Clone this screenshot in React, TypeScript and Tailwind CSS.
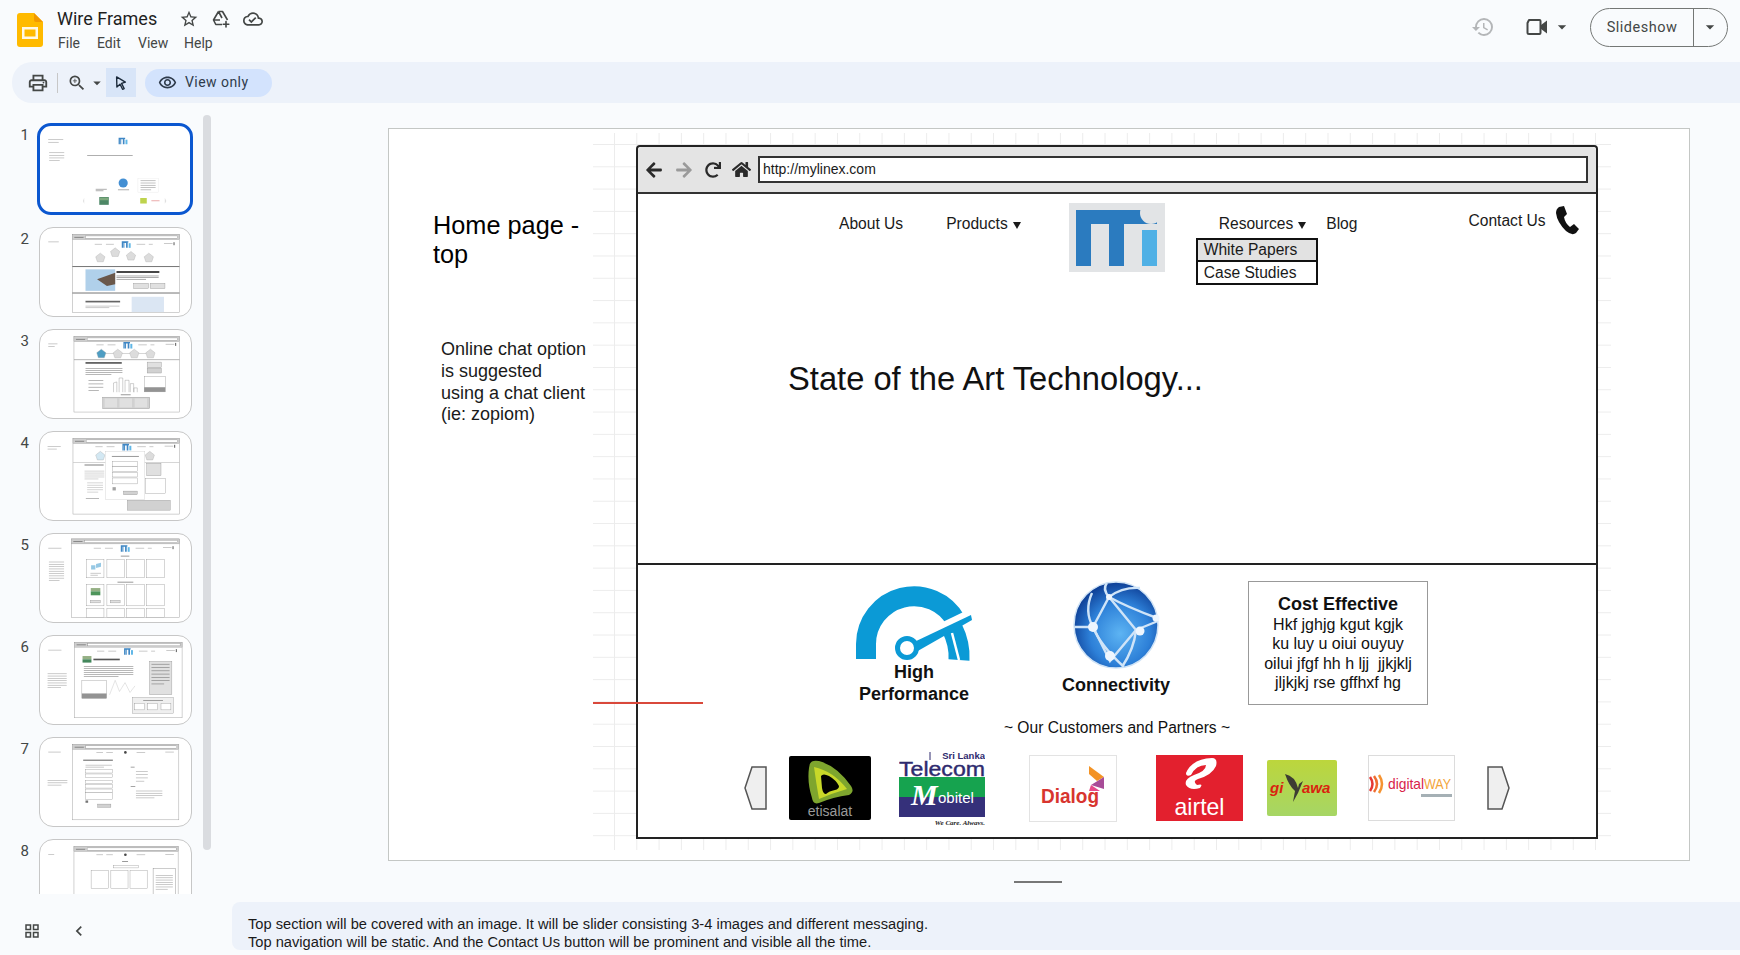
import React from 'react';
import {
  MdArrowDropDown,
  MdChevronLeft,
  MdHistory,
  MdOutlineCloudDone,
  MdOutlineGridView,
  MdOutlinePrint,
  MdOutlineRemoveRedEye,
  MdStarBorder,
  MdZoomIn,
} from 'react-icons/md';
import { FaArrowLeft, FaArrowRight, FaHome, FaRedo } from 'react-icons/fa';

const TopBar: React.FC = () => (
  <header className="flex h-[62px] shrink-0 items-start">
    <svg viewBox="0 0 26 34" className="ml-[17px] mt-[13px] h-[34px] w-[26px] shrink-0">
      <path d="M3 0H17L26 9V31a3 3 0 0 1-3 3H3a3 3 0 0 1-3-3V3a3 3 0 0 1 3-3Z" fill="#ffba00" />
      <path d="M17 0L26 9H19a2 2 0 0 1-2-2Z" fill="#f29900" />
      <path d="M5 14H21V26H5Z M7.5 16.5V23.5H18.5V16.5Z" fill="#fff" fillRule="evenodd" opacity="0.9" />
    </svg>
    <div className="ml-[14px] flex flex-col">
      <div className="mt-[7px] flex items-center">
        <span className="w-[120px] text-[18px] leading-[24px] text-[#1f1f1f]">Wire Frames</span>
        <MdStarBorder className="ml-[2px] text-[20px] text-[#444746]" />
        <svg viewBox="0 0 20 20" className="ml-[12px] h-[20px] w-[20px] text-[#444746]" fill="none" stroke="currentColor" strokeWidth="1.6" strokeLinejoin="round">
          <path d="M7.5 2.5H11.5L16.5 11M7.5 2.5L2.5 11L4.8 15.5H11M7.5 2.5L11 9M2.5 11H9" />
          <path d="M15 12.5V18M12.2 15.2H17.8" strokeLinecap="round" />
        </svg>
        <MdOutlineCloudDone className="ml-[12px] text-[20px] text-[#444746]" />
      </div>
      <nav className="mt-[2px] flex text-[14px] leading-[20px] text-[#444746]">
        <span className="w-[39px] pl-[1px]">File</span>
        <span className="w-[41px] pl-[1px]">Edit</span>
        <span className="w-[46px] pl-[1px]">View</span>
        <span className="pl-[1px]">Help</span>
      </nav>
    </div>
    <div className="ml-auto flex h-[54px] items-center">
      <MdHistory className="text-[24px] text-[#b4b6b8]" />
      <svg viewBox="0 0 22 18" className="ml-[31px] h-[18px] w-[22px] text-[#444746]">
        <path d="M3 2H13.5a1 1 0 0 1 1 1V15a1 1 0 0 1-1 1H3a1.5 1.5 0 0 1-1.5-1.5V5Z" fill="none" stroke="currentColor" strokeWidth="2" strokeLinejoin="round" />
        <path d="M15 7L21 2.5V15.5L15 11Z" fill="currentColor" />
      </svg>
      <MdArrowDropDown className="ml-[4px] text-[20px] text-[#444746]" />
      <div className="ml-[18px] mr-[12px] flex h-[39px] w-[138px] items-center rounded-full border border-[#747775] text-[14.5px] tracking-[0.5px] text-[#444746]">
        <span className="w-[103px] border-r border-[#747775] text-center leading-[37px]">Slideshow</span>
        <MdArrowDropDown className="ml-[6px] text-[20px]" />
      </div>
    </div>
  </header>
);

const Toolbar: React.FC = () => (
  <div className="ml-[12px] flex h-[41px] shrink-0 items-center rounded-l-[20px] bg-[#edf2fa]">
    <MdOutlinePrint className="ml-[15px] text-[22px] text-[#444746]" />
    <div className="ml-[8px] h-[20px] w-px bg-[#c7c7c7]" />
    <MdZoomIn className="ml-[9px] text-[20px] text-[#444746]" />
    <MdArrowDropDown className="ml-[1px] text-[18px] text-[#444746]" />
    <div className="flex h-[29px] w-[30px] items-center justify-center bg-[#d8e5f8]">
      <svg viewBox="0 0 16 18" className="h-[16px] w-[14px]">
        <path d="M3 2L13 8L8.6 9.4L11.6 15.3L9.8 16.2L6.9 10.4L3.3 13.6Z" fill="#dbe7f8" stroke="#1b2a3b" strokeWidth="1.6" strokeLinejoin="round" />
      </svg>
    </div>
    <div className="ml-[9px] flex h-[28px] w-[127px] items-center rounded-full bg-[#d3e3fd] text-[14px] tracking-[0.45px] text-[#2f3b4b]">
      <MdOutlineRemoveRedEye className="ml-[13px] text-[19px]" />
      <span className="ml-[8px]">View only</span>
    </div>
  </div>
);

const Greek: React.FC<{ x: number; y: number; w: number; n: number; step?: number; fill?: string }> = ({
  x,
  y,
  w,
  n,
  step = 6,
  fill = '#a8a8a8',
}) => (
  <>
    {Array.from({ length: n }).map((_, i) => (
      <rect key={i} x={x} y={y + i * step} width={i === n - 1 && n > 1 ? w * 0.7 : w} height={2} fill={fill} />
    ))}
  </>
);

const MiniMark: React.FC<{ x: number; y: number; s?: number }> = ({ x, y, s = 1 }) => (
  <g transform={`translate(${x} ${y}) scale(${s})`}>
    <path d="M0 0H20V4H18V20H13V5H8V20H5V5H4V20H0Z" fill="#2b7bbf" />
    <rect x="21" y="6" width="6" height="14" fill="#4fb0e5" />
  </g>
);

const MiniChrome: React.FC<{ x: number; y: number; x2: number; y2: number }> = ({ x, y, x2, y2 }) => (
  <>
    <rect x={x} y={y} width={x2 - x} height={y2 - y} fill="#fff" stroke="#999" strokeWidth="1.5" />
    <rect x={x} y={y} width={x2 - x} height={15} fill="#c9c9c9" stroke="#888" strokeWidth="1" />
    <rect x={x + 40} y={y + 4} width={x2 - x - 46} height={7} fill="#fff" stroke="#777" />
    <Greek x={x + 6} y={y + 7} w={28} n={1} fill="#555" />
  </>
);

const MiniNav: React.FC<{ x: number; y: number }> = ({ x, y }) => (
  <>
    <Greek x={x + 68} y={y + 8} w={22} n={1} />
    <Greek x={x + 102} y={y + 8} w={24} n={1} />
    <MiniMark x={x + 150} y={y} />
    <Greek x={x + 195} y={y + 8} w={26} n={1} />
    <Greek x={x + 232} y={y + 8} w={12} n={1} />
    <Greek x={x + 278} y={y + 6} w={26} n={1} />
    <rect x={x + 307} y={y + 3} width="3" height="9" fill="#444" />
  </>
);

const Pentagon: React.FC<{ cx: number; cy: number; fill?: string }> = ({ cx, cy, fill = '#d9d9d9' }) => (
  <path
    d={`M${cx} ${cy - 14}L${cx + 14} ${cy - 3}L${cx + 9} ${cy + 12}H${cx - 9}L${cx - 14} ${cy - 3}Z`}
    fill={fill}
    stroke="#999"
  />
);

const Box: React.FC<{ x: number; y: number; w: number; h: number; fill?: string; stroke?: string }> = ({
  x,
  y,
  w,
  h,
  fill = '#fff',
  stroke = '#777',
}) => <rect x={x} y={y} width={w} height={h} fill={fill} stroke={stroke} />;

const slideThumbs: { viewBox: string; art: React.ReactNode }[] = [
  {
    viewBox: '117 45 458 264',
    art: (
      <>
        <Greek x={142} y={86} w={46} n={2} step={8} />
        <Greek x={145} y={126} w={46} n={4} step={8} />
        <MiniMark x={357} y={81} />
        <Greek x={261} y={135} w={139} n={1} fill="#777" />
        <circle cx={371} cy={220} r={14} fill="#2f83cf" />
        <Greek x={355} y={240} w={34} n={1} fill="#777" />
        <rect x={416} y={205} width={62} height={43} fill="#fff" stroke="#ddd" />
        <Greek x={424} y={212} w={46} n={5} step={7} fill="#999" />
        <Greek x={287} y={238} w={34} n={2} step={5} fill="#777" />
        <path d="M252 265L248 275L252 284V265ZM498 265L503 275L498 284Z" fill="#ddd" />
        <rect x={298} y={263} width={29} height={24} fill="#3a7a56" />
        <rect x={300} y={265} width={25} height={8} fill="#6fa06f" />
        <rect x={423} y={266} width={20} height={17} fill="#b7cf3a" />
        <rect x={457} y={273} width={25} height={3} fill="#e8a0a0" />
      </>
    ),
  },
  {
    viewBox: '117 350 458 266',
    art: (
      <>
        <Greek x={142} y={391} w={32} n={1} />
        <MiniChrome x={215} y={370} x2={540} y2={605} />
        <MiniNav x={215} y={390} />
        <Pentagon cx={300} cy={440} />
        <Pentagon cx={345} cy={424} />
        <Pentagon cx={393} cy={435} />
        <Pentagon cx={447} cy={440} />
        <rect x={215} y={465} width={325} height={3} fill="#666" />
        <rect x={215} y={545} width={325} height={3} fill="#666" />
        <rect x={255} y={475} width={90} height={65} fill="#a8cbe8" />
        <path d="M290 505L345 485V520L320 525Z" fill="#5a4638" />
        <rect x={349} y={480} width={130} height={6} fill="#333" />
        <Greek x={349} y={494} w={128} n={3} step={5} fill="#777" />
        <Box x={401} y={517} w={45} h={16} fill="#ddd" />
        <Box x={451} y={517} w={45} h={16} fill="#ddd" />
        <rect x={255} y={570} width={105} height={5} fill="#555" />
        <Greek x={255} y={585} w={103} n={2} step={5} />
        <rect x={395} y={558} width={98} height={46} fill="#d8e4f2" />
      </>
    ),
  },
  {
    viewBox: '117 655 458 266',
    art: (
      <>
        <Greek x={142} y={696} w={28} n={2} step={8} />
        <MiniChrome x={220} y={675} x2={540} y2={903} />
        <MiniNav x={220} y={691} />
        <rect x={310} y={725} width={140} height={2} fill="#bbb" />
        <Pentagon cx={303} cy={727} fill="#3b93bd" />
        <Pentagon cx={353} cy={727} />
        <Pentagon cx={403} cy={727} />
        <Pentagon cx={452} cy={727} />
        <rect x={220} y={744} width={320} height={2} fill="#888" />
        <rect x={255} y={752} width={110} height={5} fill="#444" />
        <Greek x={255} y={770} w={112} n={4} step={6} fill="#888" />
        <Greek x={264} y={807} w={45} n={4} step={10} fill="#888" />
        <path d="M340 843V815L350 812V843M357 843V800H368V843M375 843V807H387V843M391 843V817H401V843M402 843V830H412V843" fill="none" stroke="#666" />
        <Box x={442} y={752} w={43} h={16} fill="#ddd" />
        <Box x={442} y={770} w={43} h={15} fill="#ccc" />
        <Box x={433} y={795} w={64} h={47} />
        <rect x={433} y={828} width={64} height={14} fill="#888" />
        <Greek x={362} y={850} w={30} n={1} fill="#555" />
        <Box x={307} y={858} w={143} h={35} fill="#ccc" />
        <rect x={313} y={862} width={38} height={27} fill="#ddd" />
        <rect x={358} y={862} width={38} height={27} fill="#ddd" />
        <rect x={404} y={862} width={38} height={27} fill="#ddd" />
      </>
    ),
  },
  {
    viewBox: '117 30 458 268',
    art: (
      <>
        <Greek x={140} y={73} w={40} n={2} step={8} />
        <MiniChrome x={217} y={50} x2={540} y2={280} />
        <MiniNav x={217} y={66} />
        <Pentagon cx={300} cy={103} fill="#cfe6f2" />
        <Pentagon cx={450} cy={103} />
        <rect x={217} y={122} width={323} height={2} fill="#bbb" />
        <rect x={252} y={128} width={58} height={5} fill="#aaa" />
        <Greek x={252} y={148} w={60} n={5} step={6} fill="#bbb" />
        <Greek x={260} y={184} w={48} n={5} step={7} fill="#bbb" />
        <Greek x={256} y={231} w={40} n={1} fill="#888" />
        <Box x={441} y={125} w={43} h={38} fill="#ddd" />
        <Box x={437} y={172} w={60} h={45} />
        <Box x={382} y={238} w={130} h={30} fill="#ccc" />
        <rect x={315} y={90} width={120} height={145} fill="#fff" stroke="#bbb" />
        <Greek x={335} y={103} w={82} n={1} fill="#555" />
        <Box x={337} y={120} w={75} h={14} />
        <Box x={337} y={136} w={75} h={14} />
        <Box x={337} y={153} w={75} h={14} />
        <Box x={337} y={170} w={75} h={18} />
        <rect x={337} y={198} width={10} height={10} fill="#999" />
        <Box x={370} y={210} w={42} h={11} fill="#ccc" />
      </>
    ),
  },
  {
    viewBox: '117 337 458 267',
    art: (
      <>
        <Greek x={142} y={379} w={40} n={1} />
        <Greek x={144} y={421} w={46} n={9} step={7} />
        <MiniChrome x={212} y={352} x2={540} y2={590} />
        <MiniNav x={212} y={371} />
        <Greek x={362} y={403} w={26} n={1} fill="#555" />
        {[258, 320, 380, 441].map(x => (
          <React.Fragment key={x}>
            <Box x={x} y={415} w={53} h={55} />
            <Box x={x} y={490} w={53} h={65} />
            <Box x={x} y={562} w={53} h={28} />
          </React.Fragment>
        ))}
        <path d="M272 432H285V445H272ZM287 428L302 424V436L287 440Z" fill="#5aa9d6" opacity="0.7" />
        <Greek x={270} y={455} w={32} n={2} step={6} />
        <Greek x={352} y={482} w={48} n={1} fill="#555" />
        <rect x={271} y={501} width={29} height={10} fill="#8aa878" />
        <rect x={271} y={511} width={29} height={12} fill="#3b8a4a" />
        <Box x={270} y={538} w={30} h={8} fill="#ddd" />
        <Box x={330} y={538} w={30} h={8} fill="#ddd" />
      </>
    ),
  },
  {
    viewBox: '117 643 458 268',
    art: (
      <>
        <Greek x={142} y={685} w={40} n={1} />
        <Greek x={140} y={757} w={58} n={7} step={7} />
        <MiniChrome x={222} y={662} x2={548} y2={892} />
        <MiniNav x={222} y={680} />
        <rect x={246} y={704} width={27} height={10} fill="#8aa878" />
        <rect x={246} y={714} width={27} height={10} fill="#2f7a4a" />
        <rect x={279} y={712} width={80} height={5} fill="#444" />
        <Greek x={250} y={735} w={150} n={6} step={6} fill="#888" />
        <Box x={244} y={778} w={75} h={55} />
        <rect x={244} y={818} width={75} height={15} fill="#888" />
        <path d="M328 822L345 778L358 812L375 785L390 815L405 795" fill="none" stroke="#aaa" />
        <Box x={449} y={720} w={68} h={102} fill="#ddd" />
        <Greek x={455} y={728} w={55} n={7} step={10} fill="#777" />
        <Box x={397} y={830} w={125} h={48} fill="#eee" />
        <Greek x={430} y={838} w={60} n={1} fill="#666" />
        <Box x={404} y={848} w={30} h={20} />
        <Box x={444} y={848} w={30} h={20} />
        <Box x={484} y={848} w={30} h={20} />
      </>
    ),
  },
  {
    viewBox: '117 18 458 269',
    art: (
      <>
        <Greek x={142} y={60} w={38} n={1} />
        <Greek x={140} y={147} w={60} n={3} step={7} />
        <MiniChrome x={216} y={38} x2={538} y2={268} />
        <Greek x={288} y={61} w={20} n={1} />
        <Greek x={318} y={61} w={20} n={1} />
        <circle cx={376} cy={62} r={4} fill="#333" />
        <Greek x={410} y={61} w={26} n={1} />
        <Greek x={497} y={60} w={26} n={1} />
        <rect x={248} y={84} width={90} height={4} fill="#777" />
        <Greek x={255} y={100} w={80} n={2} step={6} />
        <Box x={255} y={115} w={82} h={10} />
        <Box x={255} y={128} w={82} h={10} />
        <Box x={255} y={148} w={82} h={10} />
        <Box x={255} y={161} w={82} h={10} />
        <Box x={255} y={174} w={82} h={10} />
        <Box x={255} y={185} w={82} h={22} />
        <rect x={255} y={209} width={8} height={7} fill="#666" />
        <Box x={292} y={220} w={40} h={10} fill="#ccc" />
        <Greek x={392} y={106} w={12} n={1} fill="#666" />
        <Greek x={408} y={119} w={36} n={4} step={10} />
        <Greek x={392} y={165} w={14} n={1} fill="#666" />
        <Greek x={408} y={179} w={80} n={4} step={7} />
      </>
    ),
  },
  {
    viewBox: '117 325 458 268',
    art: (
      <>
        <Greek x={142} y={368} w={18} n={1} />
        <MiniChrome x={220} y={345} x2={536} y2={590} />
        <Greek x={288} y={369} w={20} n={1} />
        <Greek x={318} y={369} w={20} n={1} />
        <circle cx={376} cy={370} r={4} fill="#333" />
        <Greek x={410} y={369} w={26} n={1} />
        <Greek x={497} y={368} w={26} n={1} />
        <Greek x={366} y={390} w={18} n={1} fill="#555" />
        <Box x={340} y={402} w={75} h={8} />
        <Box x={272} y={418} w={52} h={55} />
        <Box x={332} y={418} w={52} h={55} />
        <Box x={390} y={418} w={52} h={55} />
        <Box x={460} y={412} w={68} h={110} fill="#fff" stroke="#555" />
        <Greek x={468} y={432} w={52} n={7} step={7} />
      </>
    ),
  },
];

const Filmstrip: React.FC = () => (
  <aside className="relative flex w-[232px] shrink-0 flex-col">
    <div className="h-[791px] overflow-hidden pt-[20px]">
      <ul className="flex flex-col gap-[12px]">
        {slideThumbs.map((thumb, i) => (
          <li key={i} className="flex items-start text-[15px] leading-[20px] text-[#444746]">
            <span className="w-[29px] pt-[2px] text-right">{i + 1}</span>
            <div
              className={
                i === 0
                  ? 'ml-[8px] h-[92px] w-[156px] overflow-hidden rounded-[14px] border-[3px] border-[#0b57d0] bg-white'
                  : 'ml-[10px] h-[90px] w-[153px] overflow-hidden rounded-[14px] border border-[#c7c7c7] bg-white'
              }
            >
              <svg viewBox={thumb.viewBox} preserveAspectRatio="none" className="h-full w-full opacity-90 blur-[0.35px]">
                {thumb.art}
              </svg>
            </div>
          </li>
        ))}
      </ul>
    </div>
    <div className="absolute left-[203px] top-[12px] h-[735px] w-[8px] rounded-full bg-[#dadce0]" />
    <div className="flex items-center pt-[27px] text-[#444746]">
      <MdOutlineGridView className="ml-[23px] text-[18px]" />
      <MdChevronLeft className="ml-[28px] text-[20px]" />
    </div>
  </aside>
);

const BrowserBar: React.FC = () => (
  <div className="flex h-[47px] shrink-0 items-center rounded-t-[4px] border-b-[2px] border-[#333] bg-[#e4e4e4] text-[#333]">
    <FaArrowLeft className="ml-[7px] text-[18px] text-[#2a2a2a]" />
    <FaArrowRight className="ml-[12px] text-[18px] text-[#9a9a9a]" />
    <FaRedo className="ml-[12px] text-[16px] text-[#2a2a2a]" />
    <FaHome className="ml-[11px] text-[19px] text-[#2a2a2a]" />
    <div className="ml-[7px] flex h-[27px] w-[830px] items-center border-[2.5px] border-[#333] bg-white pl-[3px] text-[14px] text-[#1a1a1a]">
      http://mylinex.com
    </div>
  </div>
);

const MiLogo: React.FC = () => (
  <svg viewBox="0 0 96 69" className="h-[69px] w-[96px] shrink-0">
    <rect width="96" height="69" fill="#e2e4e6" />
    <path d="M7 7H88V21H55V63H40V21H22V63H7Z" fill="#2b7bbf" />
    <circle cx="82" cy="10" r="11" fill="#e2e4e6" />
    <rect x="73" y="27" width="15" height="36" fill="#4fb0e5" />
  </svg>
);

const Caret: React.FC = () => (
  <span className="ml-[5px] mt-[3px] inline-block border-x-[4.5px] border-t-[7px] border-x-transparent border-t-[#1a1a1a]" />
);

const NavRow: React.FC = () => (
  <div className="flex h-[80px] shrink-0 items-start text-[15.6px] leading-[18px] text-[#1a1a1a]">
    <span className="ml-[201px] mt-[21px]">About Us</span>
    <span className="ml-[43px] mt-[21px] flex items-center">
      Products
      <Caret />
    </span>
    <div className="ml-[48px] mt-[9px]">
      <MiLogo />
    </div>
    <div className="relative ml-[54px] mt-[21px] flex items-center">
      Resources
      <Caret />
      <div className="absolute left-[-23px] top-[23px] w-[122px] border-[2px] border-[#111] leading-[20px]">
        <div className="h-[22px] border-b-[2px] border-[#111] bg-[#e2e2e2] pl-[6px]">White Papers</div>
        <div className="h-[21px] bg-white pl-[6px] leading-[21px]">Case Studies</div>
      </div>
    </div>
    <span className="ml-[20px] mt-[21px]">Blog</span>
    <span className="ml-[111px] mt-[18px]">Contact Us</span>
    <svg viewBox="0 0 24 30" className="ml-[9px] mt-[11px] h-[30px] w-[24px] shrink-0">
      <path d="M4 2L9 1L12 9L9 12Q10 18 15 22L19 19L24 24L21 28Q17 31 11 26Q2 17 1 8Q1 4 4 2Z" fill="#111" />
    </svg>
  </div>
);

const Gauge: React.FC = () => (
  <svg viewBox="0 0 116 75" className="h-[75px] w-[116px]">
    <path d="M10 73V58A48 48 0 0 1 100 35" fill="none" stroke="#0b9ad6" strokeWidth="20" />
    <path d="M96 42Q104 58 103 74" fill="none" stroke="#0b9ad6" strokeWidth="21" />
    <path d="M96 47L103 74" stroke="#fff" strokeWidth="2.5" />
    <path d="M58 56L116 28" stroke="#fff" strokeWidth="11" />
    <path d="M56 57L115 29L116 34L60 66Z" fill="#0b9ad6" />
    <circle cx="51" cy="62" r="9.5" fill="#fff" stroke="#0b9ad6" strokeWidth="5" />
  </svg>
);

const Globe: React.FC = () => (
  <svg viewBox="0 0 88 88" className="h-[88px] w-[88px]">
    <defs>
      <radialGradient id="globeFill" cx="55%" cy="60%" r="60%">
        <stop offset="0%" stopColor="#5db4f3" />
        <stop offset="60%" stopColor="#2d80d8" />
        <stop offset="100%" stopColor="#0e3f96" />
      </radialGradient>
    </defs>
    <ellipse cx="44" cy="44" rx="42" ry="43" fill="url(#globeFill)" stroke="#cfe3f6" strokeWidth="1.5" />
    <g fill="none" stroke="#cfe4f8" strokeWidth="2.4">
      <path d="M21 46L37 16L64 49L38 80Z" />
      <path d="M37 16Q50 6 68 7M37 16Q55 26 85 37M64 49L86 40M64 49Q62 68 50 86M21 46Q28 64 52 86M21 46Q12 30 20 12M3 46H21M37 16Q30 8 35 2" />
    </g>
    <g fill="#eef6fe">
      <circle cx="21" cy="46" r="5" />
      <circle cx="37" cy="16" r="3" />
      <circle cx="68" cy="50" r="4.5" />
      <circle cx="38" cy="75" r="5" />
      <circle cx="84" cy="37" r="3.5" />
    </g>
  </svg>
);

const PrevNext: React.FC<{ flip?: boolean }> = ({ flip }) => (
  <svg viewBox="0 0 23 44" className={flip ? 'h-[44px] w-[23px] shrink-0 -scale-x-100' : 'h-[44px] w-[23px] shrink-0'}>
    <path d="M22 1H8L1 22L8 43H22Z" fill="#efefef" stroke="#555" strokeWidth="1.5" />
  </svg>
);

const Partners: React.FC = () => (
  <div className="flex h-[74px] items-center pl-[106px]">
    <PrevNext />
    <svg viewBox="0 0 82 64" className="ml-[22px] h-[64px] w-[82px] shrink-0">
      <rect width="82" height="64" rx="2" fill="#000" />
      <path d="M20 12Q20 3 30 5Q48 10 62 30Q66 36 60 39Q44 41 30 47Q24 49 23 42Q18 26 20 12Z" fill="#7ea52e" />
      <path d="M25 11Q44 15 58 33Q44 37 30 43Q27 26 25 11Z" fill="#c8d829" />
      <path d="M32 20Q34 17 40 20Q47 24 50 30Q50 33 46 34Q40 35 37 38Q34 38 33 32Z" fill="#000" />
      <text x="41" y="60" textAnchor="middle" fontSize="14" fill="#9a9a9a">etisalat</text>
    </svg>
    <svg viewBox="0 0 86 74" className="ml-[28px] h-[74px] w-[86px] shrink-0">
      <text x="86" y="7.5" textAnchor="end" fontSize="9.5" fontWeight="700" fill="#2e2a6e">Sri Lanka</text>
      <path d="M31 1V9" stroke="#2e2a6e" />
      <text x="0" y="25" fontSize="20" stroke="#2e2a6e" strokeWidth="0.4" fill="#2e2a6e" textLength="86" lengthAdjust="spacingAndGlyphs">Telecom</text>
      <rect y="26" width="86" height="20" fill="#16a34f" />
      <rect y="46" width="86" height="20" fill="#35307a" />
      <text x="12" y="54" fontSize="30" fontFamily="Liberation Serif, serif" fontStyle="italic" fontWeight="700" fill="#fff">M</text>
      <text x="39" y="52" fontSize="15" fill="#fff">obitel</text>
      <text x="86" y="73.5" textAnchor="end" fontSize="7" fontFamily="Liberation Serif, serif" fontStyle="italic" fontWeight="700" fill="#222">We Care. Always.</text>
    </svg>
    <svg viewBox="0 0 88 67" className="ml-[44px] h-[67px] w-[88px] shrink-0">
      <rect x="0.5" y="0.5" width="87" height="66" fill="#fff" stroke="#e3e3e3" />
      <path d="M60 11L75 22L68 26L60 19Z" fill="#f39325" />
      <path d="M75 22V34L62 30Z" fill="#a84c98" />
      <path d="M62 30L71 36L60 36Z" fill="#e54a8a" />
      <text x="12" y="48" fontSize="20" fontWeight="700" fill="#d8352f" textLength="58" lengthAdjust="spacingAndGlyphs">Dialog</text>
    </svg>
    <svg viewBox="0 0 87 66" className="ml-[39px] h-[66px] w-[87px] shrink-0">
      <rect width="87" height="66" fill="#e3202e" />
      <path d="M30 18Q36 4 56 3Q62 3 60 11Q56 20 42 24Q36 26 41 30Q48 28 44 33Q34 36 30 30Q28 24 38 20Q50 16 50 10Q40 10 35 20Q30 22 30 18Z" fill="#fff" />
      <text x="43.5" y="60" textAnchor="middle" fontSize="24" fill="#fff" textLength="50" lengthAdjust="spacingAndGlyphs">airtel</text>
    </svg>
    <svg viewBox="0 0 70 56" className="ml-[24px] h-[56px] w-[70px] shrink-0">
      <defs>
        <linearGradient id="giyawaFill" x1="0" y1="0" x2="0" y2="1">
          <stop offset="0%" stopColor="#bcd63c" />
          <stop offset="100%" stopColor="#a6d665" />
        </linearGradient>
      </defs>
      <rect width="70" height="56" rx="2" fill="url(#giyawaFill)" />
      <text x="3" y="33" fontSize="15" fontWeight="700" fontStyle="italic" fill="#d9230f">gi</text>
      <text x="35" y="33" fontSize="15" fontWeight="700" fontStyle="italic" fill="#d9230f">awa</text>
      <path d="M18 14Q28 16 31 28L32 24L36 21L31 33L26 42L28 31Q22 26 18 14Z" fill="#3d3d33" />
    </svg>
    <svg viewBox="0 0 87 66" className="ml-[31px] h-[66px] w-[87px] shrink-0">
      <rect x="0.5" y="0.5" width="86" height="65" fill="#fff" stroke="#dcdcdc" />
      <g fill="none" strokeWidth="2.5">
        <path d="M2 22Q7 29 2 36" stroke="#e53935" />
        <path d="M6 21Q12 29 6 37" stroke="#ef6c2e" />
        <path d="M11 20Q17 29 11 38" stroke="#f59331" />
      </g>
      <text x="20" y="34" fontSize="14.5" fill="#d8234a" textLength="36" lengthAdjust="spacingAndGlyphs">digital</text>
      <text x="56" y="34" fontSize="14.5" fill="#f3a43a" textLength="27" lengthAdjust="spacingAndGlyphs">WAY</text>
      <rect x="53" y="39" width="31" height="3" fill="#a5b0b5" />
    </svg>
    <div className="ml-[32px]">
      <PrevNext flip />
    </div>
  </div>
);

const FeatureRow: React.FC = () => (
  <div className="flex h-[124px] items-start text-center">
    <div className="ml-[196px] flex w-[160px] flex-col items-center pt-[5px] text-[18px] font-bold leading-[22px]">
      <Gauge />
      <span>High</span>
      <span>Performance</span>
    </div>
    <div className="ml-[52px] flex w-[140px] flex-col items-center text-[18px] font-bold leading-[22px]">
      <Globe />
      <span className="mt-[5px]">Connectivity</span>
    </div>
    <div className="ml-[62px] h-[124px] w-[180px] border-[1.5px] border-[#999] pt-[12px] text-[16px] leading-[19.3px]">
      <div className="text-[18px] font-bold leading-[21px]">Cost Effective</div>
      <div>Hkf jghjg kgut kgjk</div>
      <div>ku luy u oiui ouyuy</div>
      <div>oilui jfgf hh h ljj&nbsp; jjkjklj</div>
      <div>jljkjkj rse gffhxf hg</div>
    </div>
  </div>
);

const Wireframe: React.FC = () => (
  <div className="absolute left-[247px] top-[16px] flex h-[694px] w-[962px] flex-col rounded-t-[4px] border-[2px] border-[#222] bg-white text-[#111]">
    <BrowserBar />
    <div className="h-[371px] shrink-0 border-b-[2.5px] border-[#222]">
      <NavRow />
      <div className="ml-[150px] mt-[87px] text-[32.7px] leading-[36px]">State of the Art Technology...</div>
    </div>
    <div className="flex-1 pt-[16px]">
      <FeatureRow />
      <div className="mt-[14px] text-center text-[15.6px] leading-[18px]">~ Our Customers and Partners ~</div>
      <div className="mt-[14px]">
        <Partners />
      </div>
    </div>
  </div>
);

const Slide: React.FC = () => (
  <div className="relative h-[733px] w-[1302px] border border-[#c4c7c5] bg-white font-['Liberation_Sans',Arial,sans-serif] text-black">
    <div className="absolute left-[204px] top-[4px] h-[717px] w-[1018px] bg-[linear-gradient(to_right,#ececec_1px,transparent_1px),linear-gradient(to_bottom,#ececec_1px,transparent_1px)] bg-[size:22.3px_22.3px] bg-[position:21px_11px]" />
    <div className="absolute left-[44px] top-[82px] w-[170px] text-[25.3px] leading-[29px]">Home page - top</div>
    <div className="absolute left-[52px] top-[210px] w-[160px] text-[18px] leading-[21.8px] text-[#1a1a1a]">
      Online chat option
      <br />
      is suggested
      <br />
      using a chat client
      <br />
      (ie: zopiom)
    </div>
    <Wireframe />
    <div className="absolute left-[204px] top-[573px] h-[2px] w-[110px] bg-[#d9483b]" />
  </div>
);

const App: React.FC = () => (
  <div className="flex h-[955px] w-[1740px] flex-col overflow-hidden bg-[#f9fbfd] font-['Roboto',sans-serif]">
    <TopBar />
    <Toolbar />
    <div className="flex min-h-0 flex-1">
      <Filmstrip />
      <main className="flex min-w-0 flex-1 flex-col">
        <div className="pl-[156px] pt-[25px]">
          <Slide />
        </div>
        <div className="ml-[782px] mt-[20px] h-[1.5px] w-[48px] bg-[#777]" />
        <div className="mb-[5px] mt-auto h-[48px] rounded-l-[8px] bg-[#edf2fa] pl-[16px] pt-[13px] font-['Liberation_Sans',Arial,sans-serif] text-[14.66px] leading-[18px] text-[#1a1a1a]">
          <p>Top section will be covered with an image. It will be slider consisting 3-4 images and different messaging.</p>
          <p>Top navigation will be static. And the Contact Us button will be prominent and visible all the time.</p>
        </div>
      </main>
    </div>
  </div>
);

export default App;
